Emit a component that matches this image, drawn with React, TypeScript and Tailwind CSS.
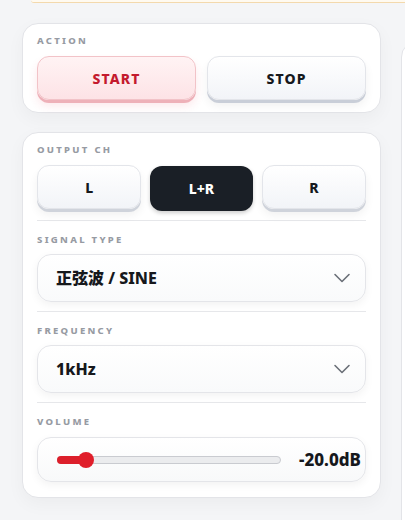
import React from "react";

const font = { fontFamily: '"Noto Sans", "Noto Sans CJK JP", sans-serif' };

const Label: React.FC<{ text: string }> = ({ text }) => (
    <div className="h-[14px] flex items-center text-[9.5px] font-extrabold tracking-[0.24em] text-[#979ba3] leading-none">
        {text}
    </div>
);

const Chevron = () => (
    <svg width="18" height="12" viewBox="0 0 18 12" fill="none">
        <path d="M2 2.5 L9 9.5 L16 2.5" stroke="#6b7078" strokeWidth="1.6" strokeLinecap="round" strokeLinejoin="round" />
    </svg>
);

const Divider = () => <div className="h-px bg-[#e6e7ea] my-[9px]" />;

const Select: React.FC<{ value: string }> = ({ value }) => (
    <div className="h-[48px] rounded-[14px] border border-[#e4e5e9] bg-gradient-to-b from-white to-[#f9fafb] shadow-[0_3px_8px_rgba(0,0,0,0.05)] flex items-center justify-between pl-[18px] pr-[14px]">
        <span className="text-[16px] font-extrabold text-[#16181c]">{value}</span>
        <Chevron />
    </div>
);

const App: React.FC = () => {
    return (
        <div className="w-[405px] h-[520px] bg-[#f4f5f7] overflow-hidden relative" style={font}>
            <div className="ml-[31px] w-[400px] h-[3px] bg-[#fffaf0] border-b border-[#f3d9ad] rounded-bl-[10px]" />
            <div className="flex">
                <div className="ml-[22px] w-[359px] shrink-0 mt-[20px] flex flex-col gap-[19px]">
                    <div className="rounded-[16px] border border-[#e3e4e8] bg-white shadow-[0_6px_18px_rgba(0,0,0,0.04)] px-[14px] pt-[10px] pb-[12px]">
                        <Label text="ACTION" />
                        <div className="mt-[8px] flex gap-[11px]">
                            <div className="flex-1 h-[44px] rounded-[12px] border border-[#f2c3c8] bg-gradient-to-b from-[#fff3f4] to-[#fde3e6] shadow-[0_3px_0_#eeb0b8,0_6px_10px_rgba(232,60,80,0.12)] flex items-center justify-center text-[14px] font-extrabold tracking-[0.08em] text-[#c41a2e]">
                                START
                            </div>
                            <div className="flex-1 h-[44px] rounded-[12px] border border-[#e3e5ea] bg-gradient-to-b from-white to-[#f2f4f8] shadow-[0_3px_0_#c9ced8,0_6px_10px_rgba(0,0,0,0.06)] flex items-center justify-center text-[14px] font-extrabold tracking-[0.08em] text-[#16181c]">
                                STOP
                            </div>
                        </div>
                    </div>
                    <div className="rounded-[16px] border border-[#e3e4e8] bg-white shadow-[0_6px_18px_rgba(0,0,0,0.04)] px-[14px] pt-[10px] pb-[15px]">
                        <Label text="OUTPUT CH" />
                        <div className="mt-[8px] flex gap-[9px]">
                            <div className="flex-1 h-[44px] rounded-[12px] border border-[#e3e5ea] bg-gradient-to-b from-white to-[#f2f4f8] shadow-[0_3px_0_#cfd3db,0_6px_10px_rgba(0,0,0,0.06)] flex items-center justify-center text-[14px] font-extrabold text-[#16181c]">
                                L
                            </div>
                            <div className="flex-1 h-[45px] mt-[1px] rounded-[12px] bg-[#1a1f26] shadow-[0_2px_4px_rgba(0,0,0,0.2)] flex items-center justify-center text-[14px] font-extrabold text-white">
                                L+R
                            </div>
                            <div className="flex-1 h-[44px] rounded-[12px] border border-[#e3e5ea] bg-gradient-to-b from-white to-[#f2f4f8] shadow-[0_3px_0_#cfd3db,0_6px_10px_rgba(0,0,0,0.06)] flex items-center justify-center text-[14px] font-extrabold text-[#16181c]">
                                R
                            </div>
                        </div>
                        <Divider />
                        <div className="pt-[3px]">
                            <Label text="SIGNAL TYPE" />
                        </div>
                        <div className="mt-[7px]">
                            <Select value="正弦波 / SINE" />
                        </div>
                        <Divider />
                        <div className="pt-[3px]">
                            <Label text="FREQUENCY" />
                        </div>
                        <div className="mt-[7px]">
                            <Select value="1kHz" />
                        </div>
                        <Divider />
                        <div className="pt-[3px]">
                            <Label text="VOLUME" />
                        </div>
                        <div className="mt-[8px] h-[45px] rounded-[14px] border border-[#e4e5e9] bg-gradient-to-b from-white to-[#f8f9fa] shadow-[0_3px_8px_rgba(0,0,0,0.05)] flex items-center pl-[19px] pr-[4px]">
                            <div className="relative w-[224px] h-[8px] rounded-full bg-[#ebecee] border border-[#c9cbd0]">
                                <div className="absolute left-[-1px] top-[-1px] h-[8px] w-[30px] rounded-full bg-[#dc1f2b]" />
                                <div className="absolute left-[20px] top-[-5px] w-[16px] h-[16px] rounded-full bg-[#e01e2a]" />
                            </div>
                            <span className="ml-auto text-[17px] font-extrabold text-[#16181c]">-20.0dB</span>
                        </div>
                    </div>
                </div>
                <div className="ml-[20px] mt-[38px] w-[40px] shrink-0 h-[500px] rounded-l-[16px] border border-[#e3e4e8] bg-white" />
            </div>
        </div>
    );
};

export default App;
